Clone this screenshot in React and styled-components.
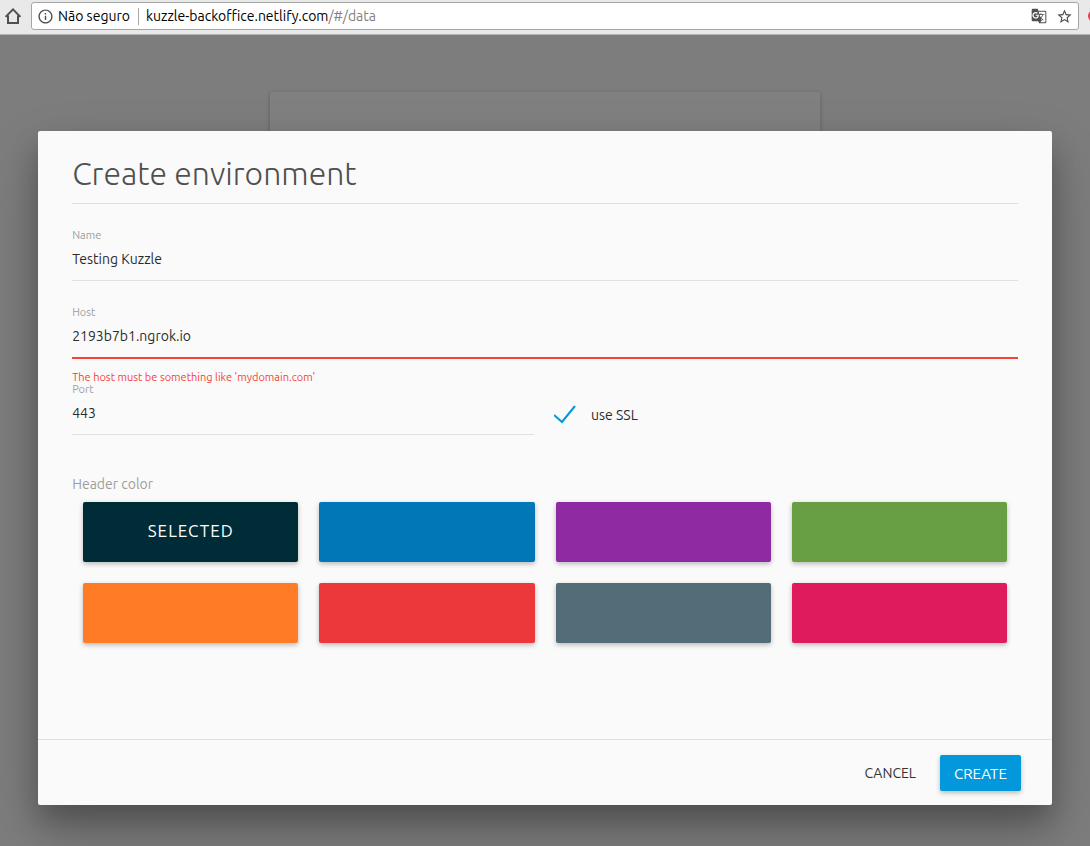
import React, { useState } from "react";
import styled, { createGlobalStyle } from "styled-components";
import { MdInfoOutline, MdStarBorder, MdGTranslate } from "react-icons/md";

const GlobalStyle = createGlobalStyle`
  *, *::before, *::after { box-sizing: border-box; }
  body {
    margin: 0;
    background: #7d7d7d;
    color: #2b2b2b;
    font-family: Ubuntu, "Noto Sans", "Open Sans", sans-serif;
    font-size: 14px;
  }
  button, input { font: inherit; color: inherit; }
`;

const Window = styled.div`
  display: flex;
  flex-direction: column;
  min-height: 100vh;
`;

const BrowserBar = styled.header`
  display: flex;
  align-items: center;
  gap: 9px;
  padding: 2px 0 4px 4px;
  background: #e9e9e9;
  border-bottom: 1px solid #b4b4b4;
  overflow: hidden;
`;

const IconButton = styled.button`
  display: flex;
  flex: none;
  padding: 0;
  border: 0;
  background: none;
  color: #505050;
  cursor: pointer;
`;

const AddressBox = styled.div`
  display: flex;
  flex: 1;
  align-items: center;
  height: 28px;
  padding: 0 5px;
  border: 1px solid #a3a6a3;
  border-radius: 3px;
  background: #fff;
`;

const Security = styled.button`
  display: flex;
  align-items: center;
  gap: 4px;
  padding: 0 8px 0 0;
  border: 0;
  border-right: 1px solid #a6a6a6;
  background: none;
  color: #000;
  line-height: 16px;

  svg { color: #505050; }
`;

const Url = styled.a`
  flex: 1;
  padding-left: 7px;
  color: #808080;
  text-decoration: none;
`;

const UrlHost = styled.span`
  color: #000;
`;

const AddressActions = styled.div`
  display: flex;
  align-items: center;
  gap: 9px;
`;

const Extension = styled.span`
  flex: none;
  width: 12px;
  height: 12px;
  margin-right: -10px;
  border-radius: 50%;
  background: #d8435c;
`;

const Stage = styled.main`
  position: relative;
  flex: 1;
  display: grid;
  justify-items: center;
  align-items: start;
  overflow: hidden;
`;

const BackCard = styled.div`
  grid-area: 1 / 1;
  width: 50.5%;
  height: 400px;
  margin-top: 57px;
  border-radius: 2px;
  background: #808080;
  box-shadow: 0 1px 4px rgba(0, 0, 0, 0.25);
`;

const Modal = styled.form`
  grid-area: 1 / 1;
  z-index: 1;
  width: 93%;
  margin: 96px 0 41px;
  border-radius: 2px;
  background: #fafafa;
  box-shadow: 0 16px 28px rgba(0, 0, 0, 0.22), 0 25px 55px rgba(0, 0, 0, 0.21);
`;

const ModalBody = styled.div`
  display: flex;
  flex-direction: column;
  padding: 24px 34px 96px;
`;

const Title = styled.h1`
  margin: 0 0 25px;
  padding-bottom: 12px;
  border-bottom: 1px solid #e0e0e0;
  color: #4f4f4f;
  font-size: 32px;
  font-weight: 300;
  line-height: 36px;
`;

const Field = styled.div`
  display: flex;
  flex-direction: column;
  margin-bottom: ${(p) => (p.$spaced ? "25px" : "0")};
`;

const FieldLabel = styled.label`
  color: #9e9e9e;
  font-size: 11px;
  line-height: 12px;
`;

const TextInput = styled.input`
  width: 100%;
  height: ${(p) => (p.$invalid ? "41px" : "40px")};
  padding: 0 0 4px;
  border: 0;
  border-bottom: ${(p) => (p.$invalid ? "2px solid #f44336" : "1px solid #e0e0e0")};
  border-radius: 0;
  outline: 0;
  background: transparent;
`;

const ErrorText = styled.p`
  margin: 12px 0 0;
  color: #f44336;
  font-size: 11px;
  line-height: 12px;
`;

const SplitRow = styled.div`
  display: grid;
  grid-template-columns: 462fr 464fr;
  gap: 20px;
  align-items: end;
`;

const CheckLabel = styled.label`
  display: flex;
  align-items: center;
  gap: 15px;
  height: 40px;
`;

const CheckBox = styled.span`
  display: grid;

  input, svg { grid-area: 1 / 1; width: 22px; height: 22px; margin: 0; }
  input { appearance: none; cursor: pointer; }
  input:not(:checked) { border: 2px solid #757575; }
  input:not(:checked) + svg { visibility: hidden; }
  svg { pointer-events: none; }
`;

const ColorSet = styled.fieldset`
  min-width: 0;
  margin: 41px 0 0;
  padding: 0;
  border: 0;
`;

const ColorLegend = styled.legend`
  padding: 0 0 10px;
  color: #9e9e9e;
  line-height: 16px;
`;

const ColorGrid = styled.div`
  display: grid;
  grid-template-columns: repeat(4, 1fr);
  gap: 21px;
  padding: 0 11px;
`;

const Swatch = styled.button`
  height: 60px;
  padding: 0 0 4px;
  border: 0;
  border-radius: 2px;
  background: ${(p) => p.$color};
  box-shadow: 0 2px 5px rgba(0, 0, 0, 0.26);
  color: #fff;
  font-size: 17px;
  letter-spacing: 1px;
  cursor: pointer;
`;

const ModalFooter = styled.footer`
  display: flex;
  justify-content: flex-end;
  gap: 10px;
  padding: 15px 31px 14px;
  border-top: 1px solid #e0e0e0;
`;

const ActionButton = styled.button`
  height: 36px;
  padding: 0 14px;
  border: 0;
  border-radius: 2px;
  background: ${(p) => (p.$primary ? "#0298db" : "transparent")};
  box-shadow: ${(p) => (p.$primary ? "0 2px 5px rgba(0, 0, 0, 0.26)" : "none")};
  color: ${(p) => (p.$primary ? "#fff" : "#333")};
  font-size: ${(p) => (p.$primary ? "15px" : "14px")};
  cursor: pointer;
`;

const COLORS = [
  ["Dark teal", "#002c38"],
  ["Blue", "#0277b8"],
  ["Purple", "#8e2ba2"],
  ["Green", "#689f45"],
  ["Orange", "#ff7b26"],
  ["Red", "#ed383b"],
  ["Slate", "#526d77"],
  ["Pink", "#e01b5d"],
];

const HomeIcon = () => (
  <svg width="18" height="18" viewBox="0 0 18 18" fill="none" stroke="currentColor" strokeWidth="2">
    <path d="M1.6 9.9 9 2.4l7.4 7.5M4 8.5V16h10V8.5" />
  </svg>
);

const CheckMark = () => (
  <svg viewBox="0 0 22 22" fill="none" stroke="#0298db" strokeWidth="2">
    <path d="M0 11l8 7L21 2" />
  </svg>
);

export default function App() {
  const [name, setName] = useState("Testing Kuzzle");
  const [host, setHost] = useState("2193b7b1.ngrok.io");
  const [port, setPort] = useState("443");
  const [ssl, setSsl] = useState(true);
  const [color, setColor] = useState(COLORS[0][1]);

  return (
    <Window>
      <GlobalStyle />
      <BrowserBar>
        <IconButton type="button" aria-label="Home"><HomeIcon /></IconButton>
        <AddressBox>
          <Security type="button">
            <MdInfoOutline size={17} />
            Não seguro
          </Security>
          <Url href="#/data"><UrlHost>kuzzle-backoffice.netlify.com</UrlHost>/#/data</Url>
          <AddressActions>
            <IconButton type="button" aria-label="Translate"><MdGTranslate size={16} /></IconButton>
            <IconButton type="button" aria-label="Bookmark"><MdStarBorder size={17} /></IconButton>
          </AddressActions>
        </AddressBox>
        <Extension />
      </BrowserBar>
      <Stage>
        <BackCard />
        <Modal onSubmit={(e) => e.preventDefault()}>
          <ModalBody>
            <Title>Create environment</Title>
            <Field $spaced>
              <FieldLabel htmlFor="name">Name</FieldLabel>
              <TextInput id="name" value={name} onChange={(e) => setName(e.target.value)} />
            </Field>
            <Field>
              <FieldLabel htmlFor="host">Host</FieldLabel>
              <TextInput
                id="host"
                $invalid
                aria-invalid="true"
                aria-describedby="host-error"
                value={host}
                onChange={(e) => setHost(e.target.value)}
              />
              <ErrorText id="host-error">The host must be something like 'mydomain.com'</ErrorText>
            </Field>
            <SplitRow>
              <Field>
                <FieldLabel htmlFor="port">Port</FieldLabel>
                <TextInput id="port" value={port} onChange={(e) => setPort(e.target.value)} />
              </Field>
              <CheckLabel>
                <CheckBox>
                  <input type="checkbox" checked={ssl} onChange={(e) => setSsl(e.target.checked)} />
                  <CheckMark />
                </CheckBox>
                use SSL
              </CheckLabel>
            </SplitRow>
            <ColorSet>
              <ColorLegend>Header color</ColorLegend>
              <ColorGrid>
                {COLORS.map(([label, value]) => (
                  <Swatch
                    key={value}
                    type="button"
                    aria-label={label}
                    aria-pressed={color === value}
                    $color={value}
                    onClick={() => setColor(value)}
                  >
                    {color === value && "SELECTED"}
                  </Swatch>
                ))}
              </ColorGrid>
            </ColorSet>
          </ModalBody>
          <ModalFooter>
            <ActionButton type="button">CANCEL</ActionButton>
            <ActionButton type="submit" $primary>CREATE</ActionButton>
          </ModalFooter>
        </Modal>
      </Stage>
    </Window>
  );
}
